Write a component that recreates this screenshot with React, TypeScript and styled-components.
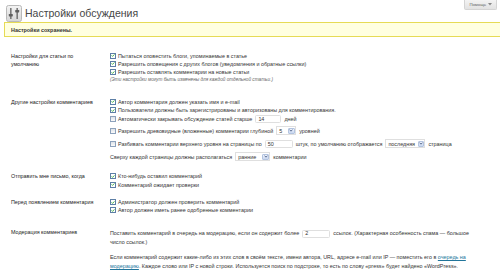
import React from 'react';
import styled, { createGlobalStyle } from 'styled-components';

const GlobalStyle = createGlobalStyle`
  html, body {
    margin: 0;
    padding: 0;
    background: #ffffff;
  }
  body {
    font-family: "Liberation Sans", Arial, sans-serif;
    color: #333333;
  }
`;

const Page = styled.div`
  position: relative;
  width: 500px;
  height: 274px;
  overflow: hidden;
`;

const HelpTab = styled.div`
  position: absolute;
  top: 0;
  right: 3px;
  height: 9px;
  padding: 0 4px;
  display: flex;
  align-items: center;
  gap: 2px;
  font-size: 4.3px;
  color: #666666;
  background: linear-gradient(#f3f3f3, #e2e2e2);
  border: 1px solid #d4d4d4;
  border-top: none;
  border-radius: 0 0 2px 2px;
`;

const Header = styled.div`
  display: flex;
  align-items: center;
  gap: 3px;
  height: 18px;
  padding: 4px 0 0 6px;
`;

const Title = styled.h2`
  margin: 0;
  font-size: 10.5px;
  font-weight: normal;
  color: #464646;
`;

const Notice = styled.div`
  display: flex;
  align-items: center;
  height: 15px;
  box-sizing: border-box;
  margin-left: 4px;
  padding: 0 6px;
  background: #ffffe0;
  border: 1px solid #e6db55;
  border-right: none;
  font-size: 5.4px;
  font-weight: bold;
  color: #333333;
`;

const Form = styled.div`
  display: flex;
  flex-direction: column;
  gap: 9px;
  padding-top: 14.5px;
`;

const Row = styled.div`
  display: grid;
  grid-template-columns: 110px 1fr;
  font-size: 5.4px;
`;

const Label = styled.div<{ $top?: number }>`
  padding: ${p => p.$top ?? 0}px 10px 0 11px;
  line-height: 8.3px;
  color: #222222;
`;

const Field = styled.div`
  display: flex;
  flex-direction: column;
  padding-right: 15px;
  color: #333333;
`;

const Line = styled.div<{ $h?: number }>`
  display: flex;
  align-items: center;
  height: ${p => p.$h ?? 8.3}px;
  white-space: nowrap;
`;

const Note = styled.div`
  height: 7.3px;
  line-height: 7.3px;
  margin-bottom: 5px;
  font-size: 4.7px;
  font-style: italic;
  color: #666666;
`;

const Box = styled.span<{ $on?: boolean }>`
  flex: none;
  display: inline-flex;
  align-items: center;
  justify-content: center;
  box-sizing: border-box;
  width: 6px;
  height: 6px;
  margin-right: 2px;
  border: 1px solid ${p => (p.$on ? '#5d7fa6' : '#8da2bc')};
  background: ${p => (p.$on ? '#ffffff' : 'linear-gradient(#dde2e8, #fbfbfb)')};
`;

const TextInput = styled.span<{ $w: number }>`
  display: inline-flex;
  align-items: center;
  box-sizing: border-box;
  width: ${p => p.$w}px;
  height: 8px;
  margin: 0 3px;
  padding: 0 2px;
  border: 1px solid #dfdfdf;
  border-radius: 1.5px;
  background: #ffffff;
  color: #333333;
  vertical-align: middle;
`;

const Select = styled.span<{ $w: number }>`
  display: inline-flex;
  align-items: stretch;
  box-sizing: border-box;
  width: ${p => p.$w}px;
  height: 9px;
  margin: 0 3px;
  border: 1px solid #dfdfdf;
  background: #ffffff;
  color: #333333;
`;

const SelectValue = styled.span`
  flex: 1;
  display: flex;
  align-items: center;
  padding: 0 2px;
`;

const SelectArrow = styled.span`
  flex: none;
  display: flex;
  align-items: center;
  justify-content: center;
  box-sizing: border-box;
  width: 6.5px;
  margin: 0.5px;
  border: 1px solid #b3c4e0;
  border-radius: 1px;
  background: linear-gradient(#eef3fd, #c9d7f0);
`;

const Para = styled.p<{ $lh: number; $top: number }>`
  margin: ${p => p.$top}px 0 0;
  line-height: ${p => p.$lh}px;
`;

const Link = styled.a`
  color: #21759b;
  text-decoration: underline;
`;

const Check = ({ on }: { on?: boolean }) => (
  <Box $on={on}>
    {on && (
      <svg width="5" height="5" viewBox="0 0 5 5">
        <path d="M0.7 2.4 L1.9 3.6 L4.3 1.1" fill="none" stroke="#1e9e1e" strokeWidth="1" />
      </svg>
    )}
  </Box>
);

const Dropdown = ({ value, w }: { value: string; w: number }) => (
  <Select $w={w}>
    <SelectValue>{value}</SelectValue>
    <SelectArrow>
      <svg width="4" height="3" viewBox="0 0 4 3">
        <path d="M0.5 0.6 L2 2.2 L3.5 0.6" fill="none" stroke="#4d6185" strokeWidth="0.9" />
      </svg>
    </SelectArrow>
  </Select>
);

const SettingsIcon = () => (
  <svg width="16" height="17" viewBox="0 0 16 17">
    <defs>
      <linearGradient id="ig" x1="0" y1="0" x2="0" y2="1">
        <stop offset="0" stopColor="#f4f4f4" />
        <stop offset="1" stopColor="#d6d6d6" />
      </linearGradient>
    </defs>
    <rect x="0.5" y="0.5" width="15" height="16" rx="2" fill="url(#ig)" stroke="#b9b9b9" />
    <rect x="4" y="3" width="1.6" height="11" fill="#7a7a7a" />
    <rect x="10.4" y="3" width="1.6" height="11" fill="#7a7a7a" />
    <rect x="2.8" y="9" width="4" height="2.4" rx="0.6" fill="#5e5e5e" />
    <rect x="9.2" y="5" width="4" height="2.4" rx="0.6" fill="#5e5e5e" />
  </svg>
);

const App: React.FC = () => {
  return (
    <Page>
      <GlobalStyle />
      <HelpTab>
        Помощь
        <svg width="4" height="3" viewBox="0 0 4 3">
          <path d="M0 0 L4 0 L2 2.6 Z" fill="#888888" />
        </svg>
      </HelpTab>

      <Header>
        <SettingsIcon />
        <Title>Настройки обсуждения</Title>
      </Header>

      <Notice>Настройки сохранены.</Notice>

      <Form>
        <Row>
          <Label>Настройки для статьи по умолчанию</Label>
          <Field>
            <Line><Check on />Пытаться оповестить блоги, упоминаемые в статье</Line>
            <Line><Check on />Разрешить оповещения с других блогов (уведомления и обратные ссылки)</Line>
            <Line><Check on />Разрешить оставлять комментарии на новые статьи</Line>
            <Note>(Эти настройки могут быть изменены для каждой отдельной статьи.)</Note>
          </Field>
        </Row>

        <Row>
          <Label>Другие настройки комментариев</Label>
          <Field>
            <Line><Check on />Автор комментария должен указать имя и e-mail</Line>
            <Line><Check on />Пользователи должны быть зарегистрированы и авторизованы для комментирования.</Line>
            <Line $h={10}>
              <Check />Автоматически закрывать обсуждение статей старше
              <TextInput $w={26}>14</TextInput>дней
            </Line>
            <Line $h={13}>
              <Check />Разрешить древовидные (вложенные) комментарии глубиной
              <Dropdown value="5" w={20} />уровней
            </Line>
            <Line $h={13}>
              <Check />Разбивать комментарии верхнего уровня на страницы по
              <TextInput $w={28}>50</TextInput>штук, по умолчанию отображается
              <Dropdown value="последняя" w={40} />страница
            </Line>
            <Line $h={13}>
              Сверху каждой страницы должны располагаться
              <Dropdown value="ранние" w={35} />комментарии
            </Line>
          </Field>
        </Row>

        <Row>
          <Label>Отправить мне письмо, когда</Label>
          <Field>
            <Line><Check on />Кто-нибудь оставил комментарий</Line>
            <Line><Check on />Комментарий ожидает проверки</Line>
          </Field>
        </Row>

        <Row>
          <Label>Перед появлением комментария</Label>
          <Field>
            <Line><Check on />Администратор должен проверить комментарий</Line>
            <Line><Check on />Автор должен иметь ранее одобренные комментарии</Line>
          </Field>
        </Row>

        <Row>
          <Label $top={5}>Модерация комментариев</Label>
          <Field>
            <Para $lh={9} $top={5.5}>
              Поставить комментарий в очередь на модерацию, если он содержит более
              <TextInput $w={28}>2</TextInput>
              ссылок. (Характерная особенность спама — большое число ссылок.)
            </Para>
            <Para $lh={9} $top={6}>
              Если комментарий содержит какие-либо из этих слов в своём тексте, имени автора, URL,
              адресе e-mail или IP — поместить его в <Link href="#">очередь на модерацию</Link>.
              Каждое слово или IP с новой строки. Используется поиск по подстроке, то есть по
              слову «press» будет найдено «WordPress».
            </Para>
          </Field>
        </Row>
      </Form>
    </Page>
  );
};

export default App;
